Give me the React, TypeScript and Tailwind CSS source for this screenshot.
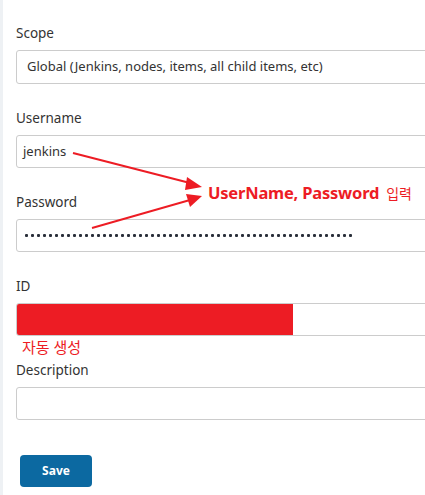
const font = { fontFamily: '"Noto Sans", "Noto Sans CJK KR", sans-serif' };

function Field({
  label,
  children,
  className = "",
  tall = false,
}: {
  label: string;
  children?: React.ReactNode;
  className?: string;
  tall?: boolean;
}) {
  return (
    <div className={className}>
      <div className="text-[13.5px] leading-[20px] text-[#333]">{label}</div>
      <div
        className={`mt-[7px] ${tall ? "h-[34px]" : "h-[33px]"} w-[440px] rounded-[3px] border border-[#ccc] bg-white flex items-center overflow-hidden`}
      >
        {children}
      </div>
    </div>
  );
}

export default function App() {
  const dots = Array.from({ length: 55 });
  return (
    <div className="relative h-[495px] w-[425px] overflow-hidden bg-white" style={font}>
      <div className="h-full border-l-[3px] border-[#eef1f4] pl-[13px] pt-[23px]">
        <Field label="Scope" tall>
          <span className="pl-[10px] text-[13px] text-[#333]">Global (Jenkins, nodes, items, all child items, etc)</span>
        </Field>
        <Field label="Username" className="mt-[24px]">
          <span className="pl-[6px] text-[13px] text-[#333]">jenkins</span>
        </Field>
        <Field label="Password" className="mt-[24px]">
          <div className="flex gap-[3px] pl-[8px]">
            {dots.map((_, i) => (
              <span key={i} className="h-[3px] w-[3px] rounded-[1px] bg-[#2a2f3a]" />
            ))}
          </div>
        </Field>
        <Field label="ID" className="mt-[24px]">
          <div className="h-full w-[276px] bg-[#ed1c24]" />
        </Field>
        <div className="mt-[2px] pl-[6px] text-[15px] leading-[18px] text-[#ed1c24]">자동 생성</div>
        <Field label="Description" className="mt-[4px]" />
        <button className="ml-[4px] mt-[35px] h-[32px] w-[72px] rounded-[4px] bg-[#0c69a1] text-[12px] font-bold text-white">
          Save
        </button>
      </div>

      <svg className="pointer-events-none absolute left-0 top-0" width="425" height="495">
        <line x1="73" y1="153" x2="190" y2="183" stroke="#ed1c24" strokeWidth="2" />
        <polygon points="202,187 187,177 185,190" fill="#ed1c24" />
        <line x1="92" y1="228" x2="190" y2="200" stroke="#ed1c24" strokeWidth="2" />
        <polygon points="202,196 186,194 190,207" fill="#ed1c24" />
      </svg>
      <div className="absolute left-[208px] top-[181px] flex items-baseline gap-[7px] text-[#ed1c24]">
        <span className="text-[16.5px] font-bold tracking-[-0.2px]">UserName, Password</span>
        <span className="text-[14px]">입력</span>
      </div>
    </div>
  );
}
